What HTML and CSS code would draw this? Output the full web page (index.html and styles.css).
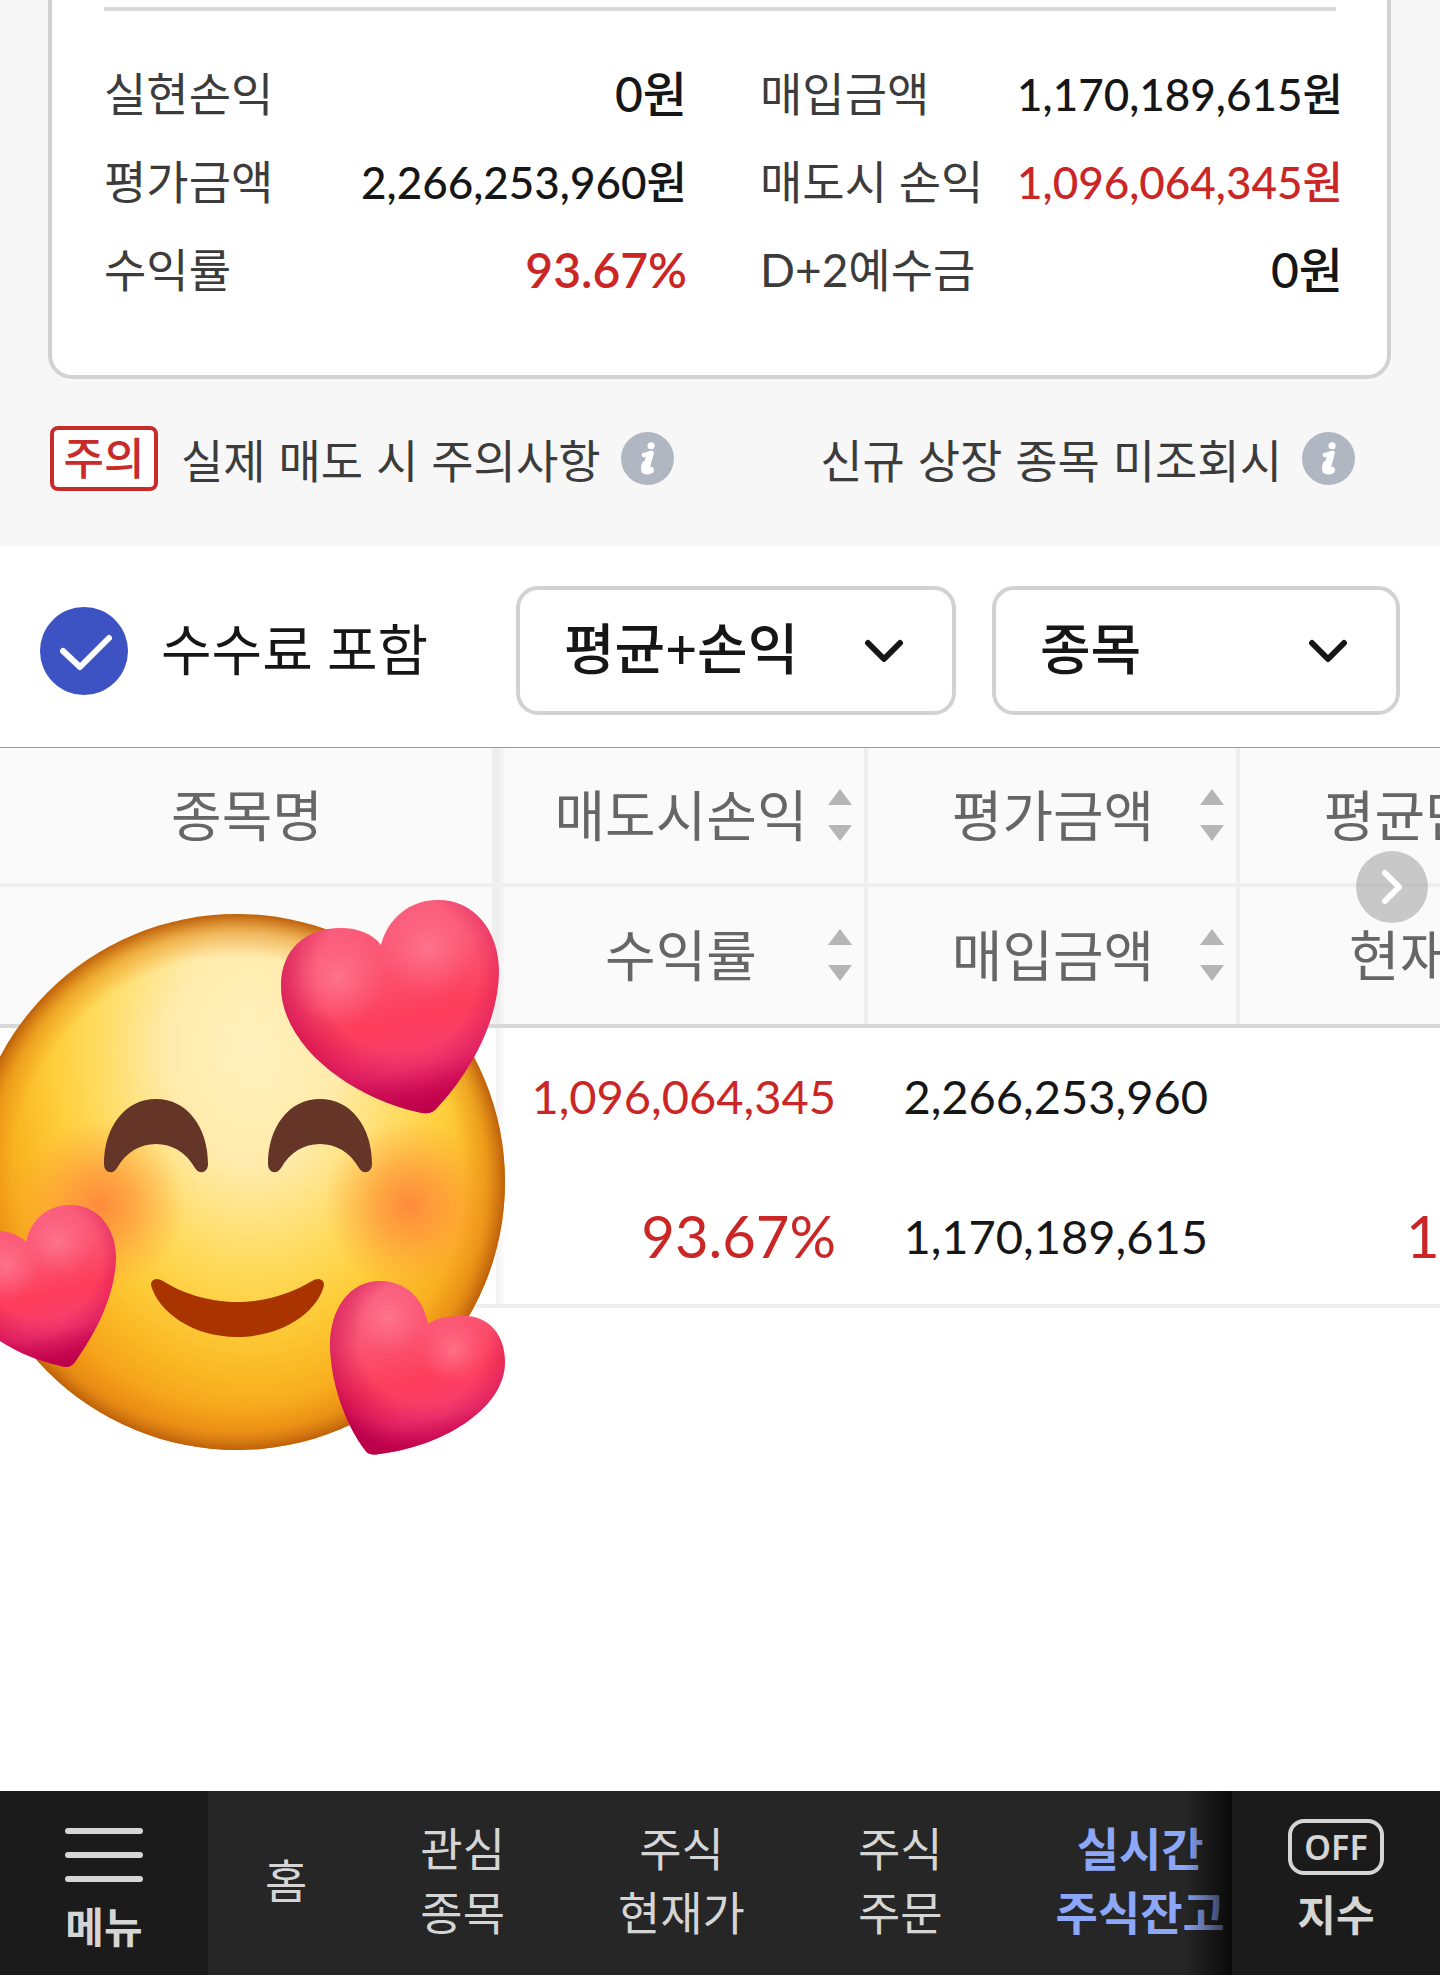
FILE: index.html
```html
<!DOCTYPE html>
<html lang="ko">
<head>
<meta charset="utf-8">
<meta name="viewport" content="width=device-width, initial-scale=1">
<title>실시간 주식잔고</title>
<link rel="stylesheet" href="styles.css">
</head>
<body>
<main class="page">
  <section class="overview">
    <div class="card">
      <hr class="card-rule">
      <dl class="summary">
        <div class="pair"><dt>실현손익</dt><dd>0원</dd></div>
        <div class="pair"><dt>매입금액</dt><dd class="long">1,170,189,615원</dd></div>
        <div class="pair"><dt>평가금액</dt><dd class="long">2,266,253,960원</dd></div>
        <div class="pair"><dt>매도시 손익</dt><dd class="long up">1,096,064,345원</dd></div>
        <div class="pair"><dt>수익률</dt><dd class="up percent">93.67%</dd></div>
        <div class="pair"><dt>D+2예수금</dt><dd>0원</dd></div>
      </dl>
    </div>
    <div class="notices">
      <span class="badge">주의</span>
      <span class="notice-text">실제 매도 시 주의사항</span>
      <button class="info" type="button" aria-label="주의사항 안내">
        <svg viewBox="0 0 52 52"><circle cx="26" cy="26" r="26" fill="#b0b7c2"/><circle cx="29.500" cy="13.500" r="3.500" fill="#fff"/><path d="M22.500 22.500Q26 22 30 20.500L26 35.500Q26 38 30 36.500M22.500 38.500Q21 35 23 31" fill="none" stroke="#fff" stroke-width="4.500" stroke-linecap="round" stroke-linejoin="round"/><path d="M28 22l-4 15q0 3 5 1" fill="none" stroke="#fff" stroke-width="6" stroke-linecap="round"/></svg>
      </button>
      <span class="notice-text last">신규 상장 종목 미조회시</span>
      <button class="info" type="button" aria-label="미조회 안내">
        <svg viewBox="0 0 52 52"><circle cx="26" cy="26" r="26" fill="#b0b7c2"/><circle cx="29.500" cy="13.500" r="3.500" fill="#fff"/><path d="M22.500 22.500Q26 22 30 20.500L26 35.500Q26 38 30 36.500M22.500 38.500Q21 35 23 31" fill="none" stroke="#fff" stroke-width="4.500" stroke-linecap="round" stroke-linejoin="round"/><path d="M28 22l-4 15q0 3 5 1" fill="none" stroke="#fff" stroke-width="6" stroke-linecap="round"/></svg>
      </button>
    </div>
  </section>

  <form class="filters">
    <label class="fee">
      <span class="tick">
        <input type="checkbox" checked>
        <svg viewBox="0 0 88 88"><path d="M23 44l17 16 29-29" fill="none" stroke="#fff" stroke-width="6" stroke-linecap="round" stroke-linejoin="round"/></svg>
      </span>
      <span class="fee-text">수수료 포함</span>
    </label>
    <div class="select wide">
      <select aria-label="표시 항목"><option>평균+손익</option></select>
      <svg viewBox="0 0 40 24"><path d="M4 4l16 16L36 4" fill="none" stroke="#161616" stroke-width="6" stroke-linecap="round" stroke-linejoin="round"/></svg>
    </div>
    <div class="select">
      <select aria-label="정렬 기준"><option>종목</option></select>
      <svg viewBox="0 0 40 24"><path d="M4 4l16 16L36 4" fill="none" stroke="#161616" stroke-width="6" stroke-linecap="round" stroke-linejoin="round"/></svg>
    </div>
  </form>

  <section class="holdings">
    <div class="scroller">
      <table>
        <colgroup><col class="col-name"><col class="col-num"><col class="col-num"><col></colgroup>
        <thead>
          <tr>
            <th>종목명</th>
            <th><div class="sort"><span>매도시손익</span><svg viewBox="0 0 24 52"><path d="M12 0l12 16H0zM12 52L0 36h24z"/></svg></div></th>
            <th><div class="sort"><span>평가금액</span><svg viewBox="0 0 24 52"><path d="M12 0l12 16H0zM12 52L0 36h24z"/></svg></div></th>
            <th>평균단가</th>
          </tr>
          <tr>
            <th></th>
            <th><div class="sort"><span>수익률</span><svg viewBox="0 0 24 52"><path d="M12 0l12 16H0zM12 52L0 36h24z"/></svg></div></th>
            <th><div class="sort"><span>매입금액</span><svg viewBox="0 0 24 52"><path d="M12 0l12 16H0zM12 52L0 36h24z"/></svg></div></th>
            <th>현재가</th>
          </tr>
        </thead>
        <tbody>
          <tr><td></td><td class="up">1,096,064,345</td><td>2,266,253,960</td><td></td></tr>
          <tr><td></td><td class="up rate">93.67%</td><td>1,170,189,615</td><td class="up rate price">1</td></tr>
        </tbody>
      </table>
    </div>
    <button class="next" type="button" aria-label="다음 열">
      <svg viewBox="0 0 72 72"><path d="M29 22l14 14-14 14" fill="none" stroke="#fff" stroke-width="6" stroke-linecap="round" stroke-linejoin="round"/></svg>
    </button>
    <svg class="emoji" viewBox="0 0 520 600" role="img" aria-label="하트에 둘러싸인 웃는 얼굴">
      <defs>
        <radialGradient id="face" gradientUnits="userSpaceOnUse" cx="0" cy="0" r="1" gradientTransform="translate(252 170) scale(285 390)">
          <stop offset="0" stop-color="#fff0bd"/>
          <stop offset=".3" stop-color="#ffebab"/>
          <stop offset=".55" stop-color="#ffdb5e"/>
          <stop offset=".7" stop-color="#fecd3a"/>
          <stop offset=".85" stop-color="#fab623"/>
          <stop offset="1" stop-color="#f39a18"/>
        </radialGradient>
        <radialGradient id="rim" gradientUnits="userSpaceOnUse" cx="237" cy="302" r="268">
          <stop offset=".84" stop-color="#e8890f" stop-opacity="0"/>
          <stop offset=".93" stop-color="#e08412" stop-opacity=".5"/>
          <stop offset="1" stop-color="#bd600c"/>
        </radialGradient>
        <radialGradient id="blush">
          <stop offset="0" stop-color="#ff8a3c"/>
          <stop offset=".4" stop-color="#ff943c" stop-opacity=".7"/>
          <stop offset="1" stop-color="#ffa53c" stop-opacity="0"/>
        </radialGradient>
        <linearGradient id="heart" x1=".35" y1="0" x2=".6" y2="1">
          <stop offset="0" stop-color="#f9607f"/>
          <stop offset=".3" stop-color="#fb5673"/>
          <stop offset=".58" stop-color="#fd3d5b"/>
          <stop offset=".8" stop-color="#f83f72"/>
          <stop offset="1" stop-color="#cf0b52"/>
        </linearGradient>
        <radialGradient id="shade" cx=".54" cy=".34" r=".66">
          <stop offset=".55" stop-color="#c4004f" stop-opacity="0"/>
          <stop offset=".8" stop-color="#c4004f" stop-opacity=".5"/>
          <stop offset="1" stop-color="#bd004a"/>
        </radialGradient>
        <radialGradient id="shine">
          <stop offset="0" stop-color="#ff7d94" stop-opacity=".75"/>
          <stop offset="1" stop-color="#ff6f8a" stop-opacity="0"/>
        </radialGradient>
        <path id="h1" d="M381 65C388 38 410 20 438 20C474 20 499 50 499 92C498 145 468 195 436 229C431 234 425 234 418 232C350 217 281 165 281 106C281 70 305 48 341 48C358 48 373 54 381 65Z"/>
        <path id="h2" d="M26 362C31 340 47 325 70 325C98 325 116 348 116 378C115 418 94 455 75 482C71 487 67 488 61 486C10 475-45 440-45 393C-45 362-25 349 0 351C12 352 20 356 26 362Z"/>
        <path id="h3" d="M428 444C424 418 405 401 380 401C350 401 330 428 330 466C331 505 346 545 365 570C368 575 373 575 379 574C440 567 505 530 505 482C505 455 489 436 465 436C448 436 436 438 428 444Z"/>
        <path id="eye" d="M104 284C104 247 125 219 156 219C187 219 208 247 208 284C208 293 199 295 195 288C186 272 172 264 156 264C140 264 126 272 117 288C113 295 104 293 104 284Z"/>
      </defs>
      <circle cx="237" cy="302" r="268" fill="url(#face)"/>
      <circle cx="100" cy="325" r="86" fill="url(#blush)"/>
      <circle cx="410" cy="325" r="86" fill="url(#blush)"/>
      <circle cx="237" cy="302" r="268" fill="url(#rim)"/>
      <use href="#eye" fill="#653528"/>
      <use href="#eye" x="164" fill="#653528"/>
      <path d="M151 405C151 399 157 397 163 401C180 412 207 422 237 422C267 422 294 412 312 401C318 397 324 399 324 405C318 432 282 457 237 457C193 457 158 432 151 405Z" fill="#aa3400"/>
      <use href="#h1" fill="url(#heart)"/><use href="#h1" fill="url(#shade)"/>
      <circle cx="338" cy="98" r="48" fill="url(#shine)"/><circle cx="428" cy="68" r="48" fill="url(#shine)"/>
      <use href="#h2" fill="url(#heart)"/><use href="#h2" fill="url(#shade)"/>
      <circle cx="6" cy="386" r="34" fill="url(#shine)"/><circle cx="58" cy="362" r="36" fill="url(#shine)"/>
      <use href="#h3" fill="url(#heart)"/><use href="#h3" fill="url(#shade)"/>
      <circle cx="388" cy="438" r="36" fill="url(#shine)"/><circle cx="454" cy="470" r="34" fill="url(#shine)"/>
    </svg>
  </section>
</main>

<nav class="tabbar">
  <button class="side" type="button">
    <svg class="burger" viewBox="0 0 78 56"><path d="M3 4h72M3 28h72M3 52h72" stroke="#d5d5d5" stroke-width="6" stroke-linecap="round"/></svg>
    <span>메뉴</span>
  </button>
  <div class="tabs">
    <a href="#home">홈</a>
    <a href="#watch">관심<br>종목</a>
    <a href="#price">주식<br>현재가</a>
    <a href="#order">주식<br>주문</a>
    <a href="#balance" class="active" aria-current="page">실시간<br>주식잔고</a>
  </div>
  <button class="side" type="button">
    <span class="off">OFF</span>
    <span>지수</span>
  </button>
</nav>
</body>
</html>
```
FILE: styles.css
```css
* { box-sizing: border-box; }

body {
  margin: 0;
  min-height: 100vh;
  display: flex;
  flex-direction: column;
  background: #fff;
  color: #161616;
  font-family: Lato, "Noto Sans CJK KR", sans-serif;
  font-size: 46px;
  overflow-x: hidden;
}

button, select, input { font: inherit; color: inherit; margin: 0; }
button { border: 0; padding: 0; background: none; }
svg { display: block; }

.page { flex: 1; min-width: 0; }

/* account summary */
.overview { background: #f7f7f7; }

.card {
  margin: 0 49px 0 48px;
  padding: 7px 44px 61px 52px;
  background: #fff;
  border: 4px solid #d2d2d2;
  border-top: 0;
  border-radius: 0 0 24px 24px;
}

.card-rule { height: 4px; margin: 0 7px 39px 0; border: 0; background: #d9d9d9; }

.summary {
  margin: 0;
  display: grid;
  grid-template-columns: 1fr 1fr;
  column-gap: 73px;
}

.pair {
  display: flex;
  justify-content: space-between;
  align-items: center;
  height: 88px;
  line-height: 88px;
  white-space: nowrap;
}

.pair dt { color: #3c3c3c; }
.pair dd { margin: 0; font-size: 48px; font-weight: 500; }
.pair dd.long { font-size: 44px; }
.pair dd.percent { font-weight: 600; }
.up, .pair dd.up { color: #cb2626; }

/* notices */
.notices {
  display: flex;
  align-items: center;
  padding: 47px 85px 55px 50px;
  white-space: nowrap;
}

.badge {
  width: 108px;
  height: 65px;
  border: 4px solid #c92a2a;
  border-radius: 8px;
  background: #fff;
  color: #c92a2a;
  font-size: 44px;
  font-weight: 500;
  line-height: 57px;
  text-align: center;
}

.notice-text {
  margin: 0 20px 0 23px;
  color: #3c3c3c;
  font-family: "Noto Sans CJK KR", sans-serif;
  line-height: 65px;
}
.notice-text.last { margin-left: auto; }
.info, .info svg { width: 53px; height: 53px; }

/* filters */
.filters {
  display: flex;
  align-items: center;
  padding: 40px 40px 32px;
  font-size: 55px;
}

.fee { flex: 1; display: flex; align-items: center; gap: 33px; white-space: nowrap; }
.fee-text { padding-bottom: 4px; line-height: 80px; }
.tick { display: grid; width: 88px; height: 88px; }
.tick > * { grid-area: 1 / 1; width: 88px; height: 88px; }
.tick input { appearance: none; border-radius: 50%; background: #3d53c4; }
.tick svg { pointer-events: none; }

.select { display: grid; width: 408px; height: 129px; margin-left: 36px; align-items: center; }
.select.wide { width: 440px; margin-left: 0; }
.select > * { grid-area: 1 / 1; }
.select select {
  appearance: none;
  width: 100%;
  height: 100%;
  padding: 0 44px 6px;
  border: 4px solid #d2d2d2;
  border-radius: 22px;
  background: #fff;
  font-weight: 500;
}
.select svg { justify-self: end; width: 40px; height: 24px; margin-right: 52px; pointer-events: none; }

/* holdings table */
.holdings { position: relative; border-top: 1px solid #999; }
.scroller { overflow-x: auto; scrollbar-width: none; }

table { width: 100%; min-width: 1612px; table-layout: fixed; border-collapse: separate; border-spacing: 0; }
.col-name { width: 496px; }
.col-num { width: 372px; }

th {
  height: 139px;
  padding: 0 0 2px 2px;
  border-right: 4px solid #efefef;
  border-bottom: 4px solid #efefef;
  background-color: #fafafa;
  color: #666;
  font-size: 55px;
  font-weight: 400;
  line-height: 80px;
}
thead tr:last-child th { height: 137px; border-bottom: 0; }

.sort { display: grid; grid-template-columns: 1fr; align-items: center; }
.sort > * { grid-area: 1 / 1; }
.sort svg { justify-self: end; width: 24px; height: 52px; margin-right: 12px; fill: #b5b5b5; }

td {
  height: 143px;
  padding: 0 32px 4px 0;
  font-size: 47px;
  line-height: 80px;
  text-align: right;
}
td.rate { font-size: 58px; }
td.price { padding-left: 166px; text-align: left; }
tbody tr:first-child td { border-top: 4px solid #d8d8d8; }
tbody tr:last-child td { height: 141px; border-bottom: 4px solid #efefef; padding-bottom: 0; }

th:nth-child(2), td:nth-child(2) {
  background-image: linear-gradient(to right, rgba(0, 0, 0, .06), rgba(0, 0, 0, 0) 10px);
}

.next {
  position: absolute;
  top: 103px;
  right: 12px;
  width: 72px;
  height: 72px;
  border-radius: 50%;
  background: rgba(150, 150, 150, .5);
}

.emoji { position: absolute; left: 0; top: 132px; width: 520px; height: 600px; }

/* bottom bar */
.tabbar { display: flex; height: 184px; background: #262626; color: #d5d5d5; }

.side {
  flex: none;
  width: 208px;
  display: flex;
  flex-direction: column;
  align-items: center;
  justify-content: center;
  gap: 12px;
  background: #1b1b1b;
  font-size: 42px;
  font-weight: 700;
  line-height: 64px;
}
.side:first-child { padding-top: 20px; }
.side:last-child { gap: 8px; }

.burger { width: 78px; height: 56px; }

.off {
  width: 96px;
  height: 56px;
  border: 4px solid #d5d5d5;
  border-radius: 16px;
  font-family: "Noto Sans", sans-serif;
  font-size: 34px;
  font-weight: 600;
  line-height: 48px;
}

.tabs {
  position: relative;
  flex: 1;
  min-width: 0;
  display: flex;
  align-items: center;
  gap: 113px;
  padding: 0 0 4px 57px;
  overflow: hidden;
}
.tabs::after {
  content: "";
  position: absolute;
  inset: 0 0 0 auto;
  width: 48px;
  background: linear-gradient(to right, rgba(0, 0, 0, 0), rgba(0, 0, 0, .75));
}
.tabs a { flex: none; color: inherit; text-align: center; text-decoration: none; line-height: 64px; white-space: nowrap; }
.tabs .active { color: #8ca6f8; font-weight: 700; }
```
